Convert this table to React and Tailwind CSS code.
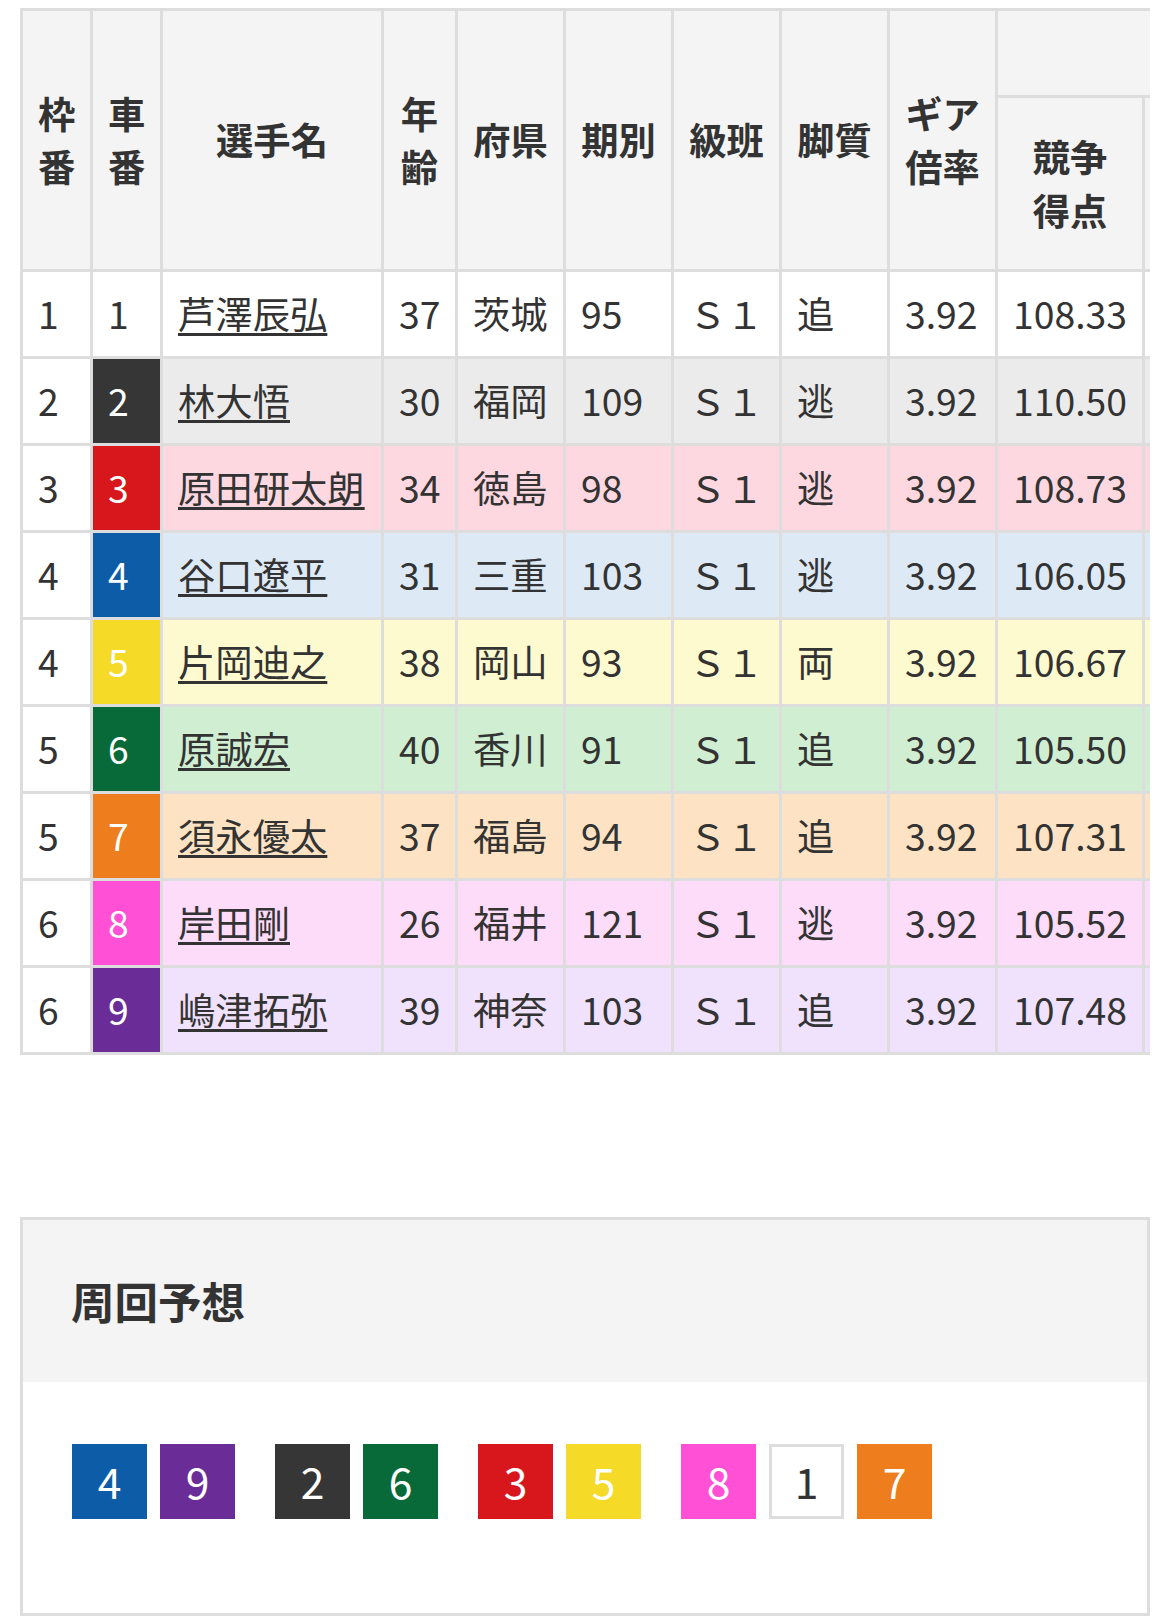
import React from "react";

const rows = [
  { w: "1", c: "1", name: "芦澤辰弘", age: "37", pref: "茨城", ki: "95", leg: "追", score: "108.33", bg: "bg-white", badge: "bg-white text-[#333]" },
  { w: "2", c: "2", name: "林大悟", age: "30", pref: "福岡", ki: "109", leg: "逃", score: "110.50", bg: "bg-[#ebebeb]", badge: "bg-[#363636] text-white" },
  { w: "3", c: "3", name: "原田研太朗", age: "34", pref: "徳島", ki: "98", leg: "逃", score: "108.73", bg: "bg-[#fdd8e0]", badge: "bg-[#d7171b] text-white" },
  { w: "4", c: "4", name: "谷口遼平", age: "31", pref: "三重", ki: "103", leg: "逃", score: "106.05", bg: "bg-[#ddeaf6]", badge: "bg-[#0c5ca8] text-white" },
  { w: "4", c: "5", name: "片岡迪之", age: "38", pref: "岡山", ki: "93", leg: "両", score: "106.67", bg: "bg-[#fefad0]", badge: "bg-[#f5da27] text-white" },
  { w: "5", c: "6", name: "原誠宏", age: "40", pref: "香川", ki: "91", leg: "追", score: "105.50", bg: "bg-[#d0efd2]", badge: "bg-[#086a39] text-white" },
  { w: "5", c: "7", name: "須永優太", age: "37", pref: "福島", ki: "94", leg: "追", score: "107.31", bg: "bg-[#fde3c3]", badge: "bg-[#ed7d1d] text-white" },
  { w: "6", c: "8", name: "岸田剛", age: "26", pref: "福井", ki: "121", leg: "逃", score: "105.52", bg: "bg-[#fddcf9]", badge: "bg-[#ff50d6] text-white" },
  { w: "6", c: "9", name: "嶋津拓弥", age: "39", pref: "神奈", ki: "103", leg: "追", score: "107.48", bg: "bg-[#f0e1fc]", badge: "bg-[#6a2c97] text-white" },
];

const groups = [
  [
    { n: "4", cls: "bg-[#0c5ca8] text-white" },
    { n: "9", cls: "bg-[#6a2c97] text-white" },
  ],
  [
    { n: "2", cls: "bg-[#363636] text-white" },
    { n: "6", cls: "bg-[#086a39] text-white" },
  ],
  [
    { n: "3", cls: "bg-[#d7171b] text-white" },
    { n: "5", cls: "bg-[#f5da27] text-white" },
  ],
  [
    { n: "8", cls: "bg-[#ff50d6] text-white" },
    { n: "1", cls: "bg-white text-[#333] border-[3px] border-[#ddd]" },
    { n: "7", cls: "bg-[#ed7d1d] text-white" },
  ],
];

const th = "bg-[#f4f4f4] font-bold text-center align-middle px-[15px] py-0 whitespace-nowrap";
const td = "px-[15px] py-0 text-left align-middle whitespace-nowrap";

export default function App() {
  return (
    <div className="w-[1170px] min-h-[1616px] bg-white text-[#333] font-['Noto_Sans_CJK_JP',sans-serif]">
      <div className="pt-[8px] px-[20px]">
        <div className="w-[1130px] overflow-hidden">
          <table className="table-fixed border-separate border-spacing-[3px] bg-[#ddd] w-[1278px] text-[37.33px] leading-[53.33px]">
            <colgroup>
              <col className="w-[67px]" />
              <col className="w-[67px]" />
              <col className="w-[218px]" />
              <col className="w-[71px]" />
              <col className="w-[105px]" />
              <col className="w-[105px]" />
              <col className="w-[105px]" />
              <col className="w-[105px]" />
              <col className="w-[105px]" />
              <col className="w-[144px]" />
              <col className="w-[150px]" />
            </colgroup>
            <thead>
              <tr className="h-[84px]">
                <th rowSpan={2} className={th}>枠<br />番</th>
                <th rowSpan={2} className={th}>車<br />番</th>
                <th rowSpan={2} className={th}>選手名</th>
                <th rowSpan={2} className={th}>年<br />齢</th>
                <th rowSpan={2} className={th}>府県</th>
                <th rowSpan={2} className={th}>期別</th>
                <th rowSpan={2} className={th}>級班</th>
                <th rowSpan={2} className={th}>脚質</th>
                <th rowSpan={2} className={th}>ギア<br />倍率</th>
                <th colSpan={2} className={th}>{"\u00a0"}</th>
              </tr>
              <tr className="h-[171px]">
                <th className={th}>競争<br />得点</th>
                <th className={th}>{"\u00a0"}</th>
              </tr>
            </thead>
            <tbody>
              {rows.map((r, i) => (
                <tr key={i} className="h-[84px]">
                  <td className={`${td} bg-white`}>{r.w}</td>
                  <td className={`${td} ${r.badge}`}>{r.c}</td>
                  <td className={`${td} ${r.bg}`}>
                    <a href="#" className="underline decoration-[3px] underline-offset-[4px] text-[#333]">{r.name}</a>
                  </td>
                  <td className={`${td} ${r.bg}`}>{r.age}</td>
                  <td className={`${td} ${r.bg}`}>{r.pref}</td>
                  <td className={`${td} ${r.bg}`}>{r.ki}</td>
                  <td className={`${td} ${r.bg}`}>Ｓ１</td>
                  <td className={`${td} ${r.bg}`}>{r.leg}</td>
                  <td className={`${td} ${r.bg}`}>3.92</td>
                  <td className={`${td} ${r.bg}`}>{r.score}</td>
                  <td className={`${td} ${r.bg}`}>{"\u00a0"}</td>
                </tr>
              ))}
            </tbody>
          </table>
        </div>

        <div className="mt-[162px] w-[1130px] border-[3px] border-[#ddd]">
          <div className="h-[162px] bg-[#f4f4f4] flex items-center pl-[48px]">
            <h2 className="font-bold text-[43.5px] leading-[60px]">周回予想</h2>
          </div>
          <div className="h-[231px] pt-[62px] pl-[49px] flex items-start gap-[40px]">
            {groups.map((g, gi) => (
              <div key={gi} className="flex gap-[13px]">
                {g.map((b, bi) => (
                  <div
                    key={bi}
                    className={`w-[75px] h-[75px] flex items-center justify-center text-[42.67px] leading-none ${b.cls}`}
                  >
                    {b.n}
                  </div>
                ))}
              </div>
            ))}
          </div>
        </div>
      </div>
    </div>
  );
}
